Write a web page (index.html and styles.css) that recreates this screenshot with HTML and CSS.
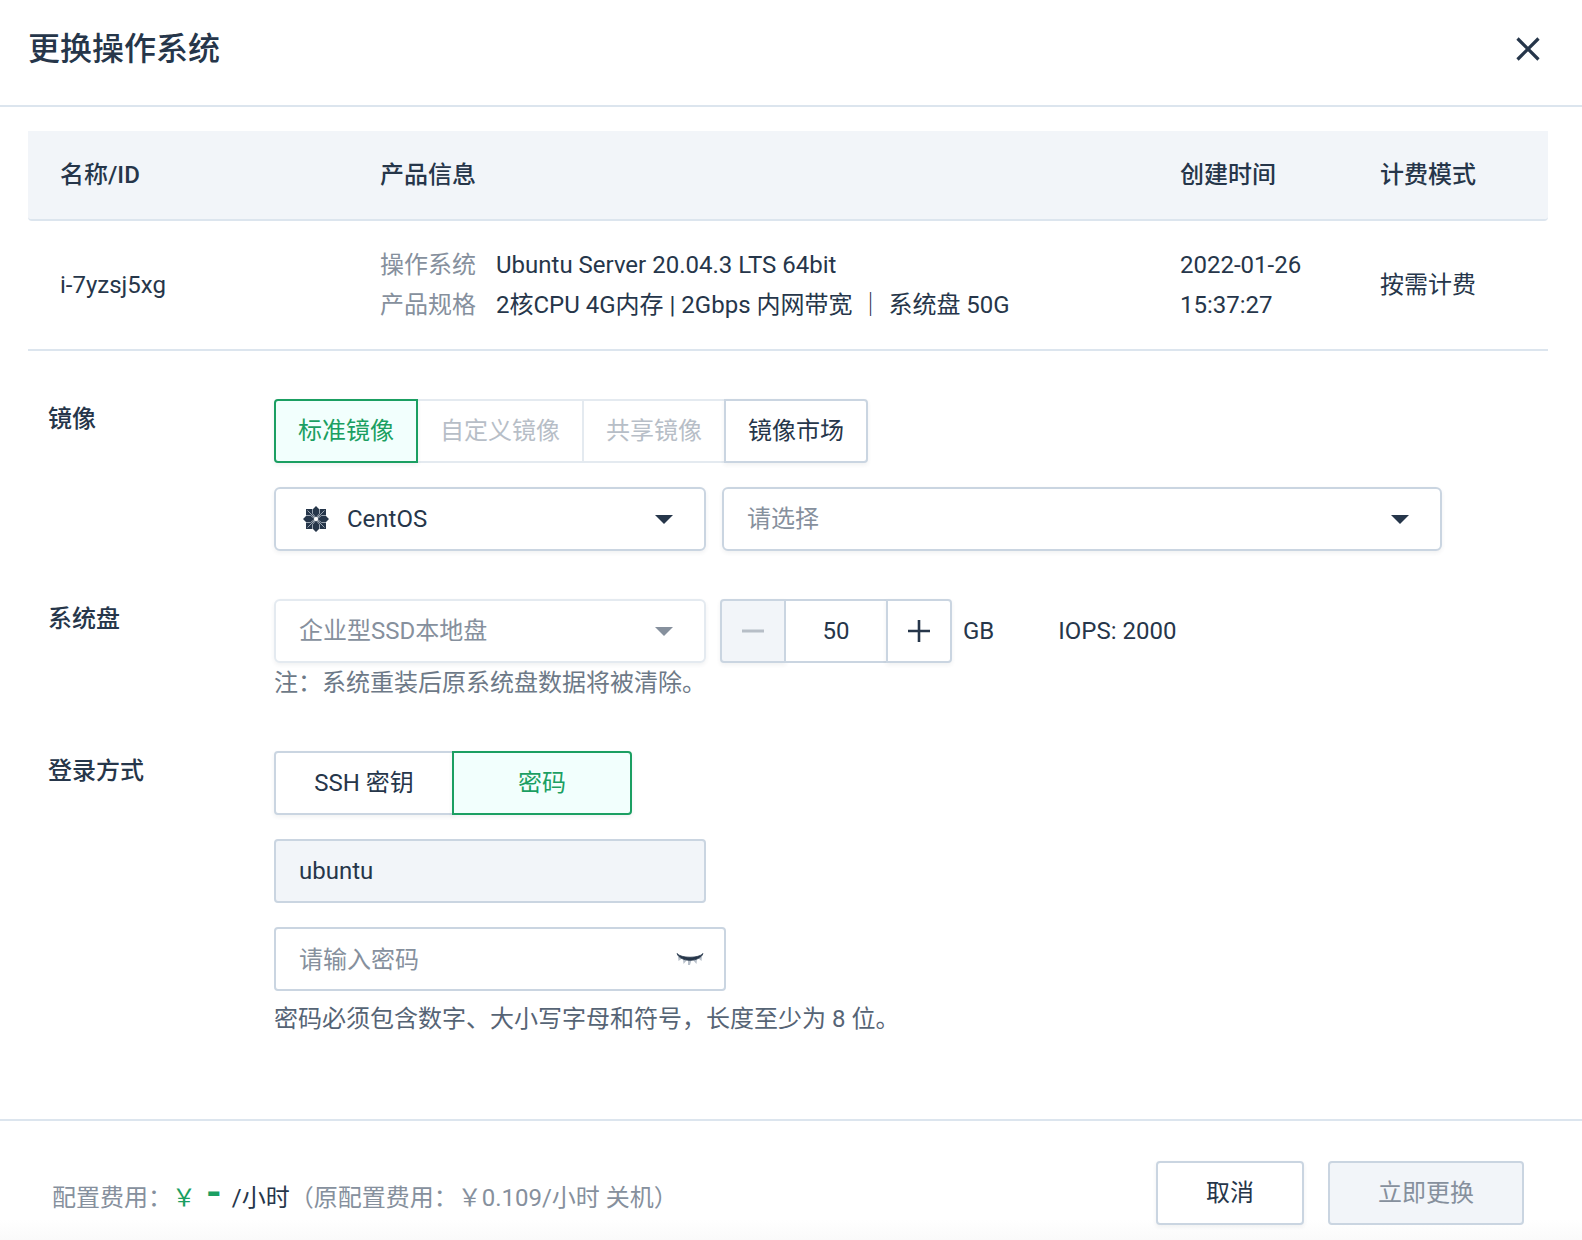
FILE: index.html
```html
<!DOCTYPE html>
<html lang="zh-CN">
<head>
<meta charset="utf-8">
<meta name="viewport" content="width=device-width, initial-scale=1">
<title>更换操作系统</title>
<link rel="stylesheet" href="styles.css">
</head>
<body>
<main class="dialog">
  <header class="dialog-header">
    <h1 class="dialog-title">更换操作系统</h1>
    <button class="close-button" type="button" aria-label="关闭">
      <svg width="24" height="24" viewBox="0 0 24 24" aria-hidden="true"><path d="M1.5 1.5 22.5 22.5M22.5 1.5 1.5 22.5" fill="none" stroke="currentColor" stroke-width="3.2"/></svg>
    </button>
  </header>

  <div class="dialog-body">
    <table class="instances">
      <colgroup><col class="col-name"><col class="col-info"><col class="col-time"><col class="col-billing"></colgroup>
      <thead>
        <tr><th scope="col">名称/ID</th><th scope="col">产品信息</th><th scope="col">创建时间</th><th scope="col">计费模式</th></tr>
      </thead>
      <tbody>
        <tr>
          <td>i-7yzsj5xg</td>
          <td>
            <dl class="spec">
              <dt>操作系统</dt><dd>Ubuntu Server 20.04.3 LTS 64bit</dd>
              <dt>产品规格</dt><dd>2核CPU 4G内存 | 2Gbps 内网带宽 ｜ 系统盘 50G</dd>
            </dl>
          </td>
          <td>2022-01-26 15:37:27</td>
          <td>按需计费</td>
        </tr>
      </tbody>
    </table>

    <form class="form" id="os-form">
      <section class="field">
        <h2 class="field-label">镜像</h2>
        <div class="field-content stack">
          <div class="segmented">
            <button class="segment selected" type="button" aria-pressed="true">标准镜像</button>
            <button class="segment" type="button" disabled>自定义镜像</button>
            <button class="segment" type="button" disabled>共享镜像</button>
            <button class="segment" type="button">镜像市场</button>
          </div>
          <div class="row">
            <div class="select-box">
              <svg class="select-icon" width="26" height="26" viewBox="0 0 26 26" aria-hidden="true">
                <path fill="#26364a" d="M13 0 16 3H23V10L26 13 23 16V23H16L13 26 10 23H3V16L0 13 3 10V3H10Z"/>
                <path fill="none" stroke="#b9c1cb" stroke-width="0.8" d="M4.500 4.500 21.500 21.500M21.500 4.500 4.500 21.500M9.500 3V7.500L13 12 16.500 7.500V3M9.500 23V18.500L13 14 16.500 18.500V23M3 9.500H7.500L12 13 7.500 16.500H3M23 9.500H18.500L14 13 18.500 16.500H23"/>
                <circle cx="13" cy="13" r="2" fill="#fff"/>
              </svg>
              <select class="select with-icon" aria-label="操作系统"><option>CentOS</option></select>
              <svg class="caret" width="18" height="9" viewBox="0 0 18 9" aria-hidden="true"><path d="M0 0H18L9 9Z" fill="currentColor"/></svg>
            </div>
            <div class="select-box wide">
              <select class="select placeholder" aria-label="镜像版本"><option>请选择</option></select>
              <svg class="caret" width="18" height="9" viewBox="0 0 18 9" aria-hidden="true"><path d="M0 0H18L9 9Z" fill="currentColor"/></svg>
            </div>
          </div>
        </div>
      </section>

      <section class="field">
        <h2 class="field-label">系统盘</h2>
        <div class="field-content">
          <div class="row disk-row">
            <div class="select-box is-disabled">
              <select class="select" aria-label="系统盘类型" disabled><option>企业型SSD本地盘</option></select>
              <svg class="caret" width="18" height="9" viewBox="0 0 18 9" aria-hidden="true"><path d="M0 0H18L9 9Z" fill="currentColor"/></svg>
            </div>
            <div class="disk-size">
              <div class="stepper">
                <button class="step" type="button" aria-label="减少" disabled><svg width="22" height="22" viewBox="0 0 22 22" aria-hidden="true"><path d="M0 11H22" stroke="currentColor" stroke-width="3"/></svg></button>
                <input class="step-value" type="text" inputmode="numeric" value="50" aria-label="系统盘容量">
                <button class="step" type="button" aria-label="增加"><svg width="22" height="22" viewBox="0 0 22 22" aria-hidden="true"><path d="M0 11H22M11 0V22" stroke="currentColor" stroke-width="2.600"/></svg></button>
              </div>
              <span>GB</span>
            </div>
            <span class="iops">IOPS: 2000</span>
          </div>
          <p class="note">注：系统重装后原系统盘数据将被清除。</p>
        </div>
      </section>

      <section class="field">
        <h2 class="field-label">登录方式</h2>
        <div class="field-content stack">
          <div class="segmented even">
            <button class="segment" type="button">SSH 密钥</button>
            <button class="segment selected" type="button" aria-pressed="true">密码</button>
          </div>
          <input class="input" type="text" value="ubuntu" aria-label="用户名" readonly>
          <div>
            <div class="password">
              <input class="input password-input" type="password" placeholder="请输入密码" aria-label="密码" autocomplete="new-password">
              <button class="reveal" type="button" aria-label="显示密码">
                <svg width="28" height="14" viewBox="0 0 28 14" aria-hidden="true">
                  <path d="M2 4.500 2.500 9 6 6.500ZM7 7 7.500 12 11 8ZM12 8V13H14L15.500 8ZM17 8 20.500 12 21 7ZM22.500 6.500 25.500 9 26 4.500Z" fill="#b7bfc9"/>
                  <path d="M1 1.500C5 6.500 23 6.500 27 1.500 24 10.500 4 10.500 1 1.500Z" fill="#26364a" stroke="#26364a" stroke-width="0.8"/>
                </svg>
              </button>
            </div>
            <p class="hint">密码必须包含数字、大小写字母和符号，长度至少为 8 位。</p>
          </div>
        </div>
      </section>
    </form>
  </div>

  <footer class="dialog-footer">
    <p class="price">配置费用：<span class="currency">￥</span><strong class="amount">-</strong><span class="unit">/小时</span>（原配置费用：￥0.109/小时 关机）</p>
    <div class="actions">
      <button class="button" type="button">取消</button>
      <button class="button" type="submit" form="os-form" disabled>立即更换</button>
    </div>
  </footer>
</main>
</body>
</html>
```
FILE: styles.css
```css
:root {
  --ink: #26364a;
  --muted: #86909d;
  --note: #6d7987;
  --faint: #b7bec7;
  --green: #1b9f62;
  --line: #dce5ee;
  --border: #cad5e1;
  --border-light: #e4eaf0;
  --fill: #f2f5f9;
  --shadow: 0 2px 4px rgba(38, 54, 74, 0.07);
}

* { box-sizing: border-box; }

body {
  margin: 0;
  background: #fff;
  color: var(--ink);
  font: 24px/40px Roboto, "Noto Sans CJK SC", sans-serif;
}

h1, h2, p, dl, dd { margin: 0; }

button, input, select {
  margin: 0;
  color: inherit;
  font: inherit;
}

.dialog {
  display: flex;
  flex-direction: column;
  min-height: 100vh;
}

.dialog-header {
  display: flex;
  align-items: center;
  justify-content: space-between;
  padding: 25px 36px 32px 28px;
  border-bottom: 2px solid var(--line);
}

.dialog-title {
  font-size: 32px;
  line-height: 48px;
  font-weight: 500;
}

.close-button {
  display: grid;
  place-items: center;
  width: 36px;
  height: 36px;
  padding: 0;
  border: 0;
  background: none;
}

.dialog-body {
  flex: 1;
  padding: 24px 34px 40px 28px;
}

.instances {
  width: 100%;
  table-layout: fixed;
  border-collapse: separate;
  border-spacing: 0;
}

.col-name { width: 320px; }
.col-time, .col-billing { width: 200px; }

.instances th,
.instances td {
  padding: 24px 32px;
  border-bottom: 2px solid var(--line);
  text-align: left;
  vertical-align: middle;
}

.instances th {
  background: var(--fill);
  font-weight: 500;
}

.instances th:first-child { border-bottom-left-radius: 4px; }
.instances th:last-child { border-bottom-right-radius: 4px; }

.spec {
  display: grid;
  grid-template-columns: auto 1fr;
  column-gap: 20px;
}

.spec dt { color: var(--muted); }

.form {
  display: flex;
  flex-direction: column;
  gap: 48px;
  padding: 48px 20px 0;
}

.field {
  display: grid;
  grid-template-columns: 226px 1fr;
}

.field-label {
  font-size: 24px;
  line-height: 40px;
  font-weight: 500;
}

.stack {
  display: flex;
  flex-direction: column;
  gap: 24px;
}

.row {
  display: flex;
  align-items: center;
  gap: 16px;
}

.disk-row { gap: 14px; }

.segmented { display: flex; }

.segment {
  height: 64px;
  padding: 0 22px;
  border: 2px solid var(--border);
  background: #fff;
  box-shadow: var(--shadow);
}

.segment + .segment { margin-left: -2px; }
.segment:first-child { border-radius: 4px 0 0 4px; }
.segment:last-child { border-radius: 0 4px 4px 0; }

.segment:disabled {
  border-color: var(--border-light);
  color: var(--faint);
  box-shadow: none;
}

.segment.selected {
  z-index: 1;
  border-color: var(--green);
  background: #f2fffd;
  color: var(--green);
}

.even .segment { width: 180px; }

.select-box {
  position: relative;
  width: 432px;
}

.select-box.wide { width: 720px; }

.select {
  display: block;
  width: 100%;
  height: 64px;
  padding: 0 64px 0 23px;
  border: 2px solid var(--border);
  border-radius: 6px;
  background: #fff;
  box-shadow: var(--shadow);
  appearance: none;
}

.select.with-icon { padding-left: 71px; }
.select.placeholder { color: var(--muted); }

.select:disabled {
  border-color: var(--border-light);
  color: var(--muted);
  opacity: 1;
}

.select-icon {
  position: absolute;
  top: 19px;
  left: 29px;
  pointer-events: none;
}

.caret {
  position: absolute;
  top: 28px;
  right: 33px;
  pointer-events: none;
}

.is-disabled .caret { color: var(--muted); }

.disk-size {
  display: flex;
  align-items: center;
  gap: 11px;
}

.stepper { display: flex; }

.step,
.step-value {
  height: 64px;
  padding: 0;
  border: 2px solid var(--border);
}

.step {
  display: grid;
  place-items: center;
  width: 66px;
  background: #fff;
  box-shadow: var(--shadow);
}

.step:first-child { border-radius: 4px 0 0 4px; }
.step:last-child { border-radius: 0 4px 4px 0; }

.step:disabled {
  background: var(--fill);
  color: var(--faint);
}

.step-value {
  width: 104px;
  margin: 0 -2px;
  border-radius: 0;
  background: #fff;
  text-align: center;
}

.iops { margin-left: 50px; }
.note { color: var(--note); }

.hint {
  margin-top: 8px;
  color: #566475;
}

.input {
  display: block;
  width: 432px;
  height: 64px;
  padding: 0 23px;
  border: 2px solid var(--border);
  border-radius: 4px;
  background: #fff;
}

.input:read-only { background: var(--fill); }

.input::placeholder {
  color: var(--muted);
  opacity: 1;
}

.password {
  position: relative;
  width: 452px;
}

.password-input {
  width: 100%;
  padding-top: 2px;
  padding-right: 64px;
}

.reveal {
  position: absolute;
  top: 16px;
  right: 16px;
  display: grid;
  place-items: center;
  width: 40px;
  height: 32px;
  padding: 0;
  border: 0;
  background: none;
}

.dialog-footer {
  display: flex;
  align-items: center;
  justify-content: space-between;
  padding: 40px 58px 15px 52px;
  border-top: 2px solid var(--line);
  background: linear-gradient(to top, #fafafa, #fff 20px);
}

.price {
  padding-top: 8px;
  color: var(--muted);
}

.currency { color: var(--green); }

.amount {
  margin: 0 10px 0 10px;
  color: var(--green);
  font-size: 40px;
  line-height: 32px;
  font-weight: 700;
}

.unit { color: var(--ink); }

.actions {
  display: flex;
  gap: 24px;
}

.button {
  height: 64px;
  padding: 0 48px;
  border: 2px solid var(--border);
  border-radius: 4px;
  background: #fff;
  box-shadow: var(--shadow);
}

.button:disabled {
  background: var(--fill);
  color: var(--muted);
  box-shadow: none;
}
```
